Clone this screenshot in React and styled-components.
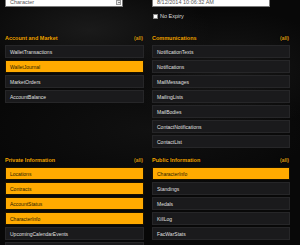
import styled, { createGlobalStyle } from "styled-components";

const Global = createGlobalStyle`
  html, body {
    margin: 0;
    padding: 0;
    background: #080808;
  }
  body {
    font-family: "Liberation Sans", Arial, sans-serif;
    overflow: hidden;
  }
`;

const Page = styled.div`
  width: 300px;
  height: 245px;
  overflow: hidden;
  padding: 0 10px 0 5px;
  box-sizing: border-box;
  background:
    radial-gradient(ellipse 120px 50px at 90px 30px, rgba(60, 60, 60, 0.35), transparent),
    radial-gradient(ellipse 110px 60px at 230px 70px, rgba(55, 55, 55, 0.3), transparent),
    radial-gradient(ellipse 160px 60px at 150px 130px, rgba(30, 30, 30, 0.4), transparent),
    #080808;
`;

const Grid = styled.div`
  display: grid;
  grid-template-columns: 139px 138px;
  column-gap: 8px;
  align-items: start;
  margin-top: ${(p) => p.$mt || 0}px;
`;

const Top = styled.div`
  height: 33px;
  display: flex;
  flex-direction: column;
`;

const Field = styled.div`
  width: ${(p) => p.$w}px;
  height: 14px;
  margin-top: -7px;
  box-sizing: border-box;
  background: #fff;
  border: 1px solid #7a7a7a;
  display: flex;
  align-items: flex-end;
  padding: 0 4px 1px;
  font-size: 5.5px;
  color: #555;
  position: relative;
`;

const Arrow = styled.div`
  position: absolute;
  right: 1px;
  bottom: 1px;
  width: 5px;
  height: 5px;
  background: #e8e8e8;
  border: 1px solid #999;
  box-sizing: border-box;
  &::after {
    content: "";
    position: absolute;
    left: 1px;
    top: 1px;
    border-left: 1px solid transparent;
    border-right: 1px solid transparent;
    border-top: 1px solid #222;
  }
`;

const Check = styled.label`
  display: flex;
  align-items: center;
  gap: 2px;
  margin-top: 6px;
  margin-left: 1px;
  font-size: 5.5px;
  color: #ddd;
`;

const Box = styled.span`
  width: 5px;
  height: 5px;
  background: #fff;
  border: 1px solid #888;
  box-sizing: border-box;
`;

const Section = styled.div`
  display: flex;
  flex-direction: column;
`;

const Header = styled.div`
  height: 10px;
  margin-bottom: 2px;
  display: flex;
  justify-content: space-between;
  align-items: center;
  color: #f0a400;
  font-size: 5.5px;
  font-weight: bold;
  text-shadow: 0 0 1px #000;
`;

const All = styled.span`
  font-size: 5px;
  font-weight: bold;
  color: #d99a10;
  margin-right: 1px;
`;

const Row = styled.div`
  height: 13px;
  margin-bottom: 2px;
  box-sizing: border-box;
  display: flex;
  align-items: center;
  padding-left: 4px;
  font-size: 5px;
  border: 1px solid ${(p) => (p.$on ? "#1a1200" : "#262628")};
  background: ${(p) => (p.$on ? "#ffaa00" : "#1a1a1c")};
  color: ${(p) => (p.$on ? "#2a1c00" : "#e6e6e6")};
  text-shadow: ${(p) => (p.$on ? "none" : "0 0 1px #000")};
`;

const topSections = [
  {
    title: "Account and Market",
    rows: [
      ["WalletTransactions", false],
      ["WalletJournal", true],
      ["MarketOrders", false],
      ["AccountBalance", false],
    ],
  },
  {
    title: "Communications",
    rows: [
      ["NotificationTexts", false],
      ["Notifications", false],
      ["MailMessages", false],
      ["MailingLists", false],
      ["MailBodies", false],
      ["ContactNotifications", false],
      ["ContactList", false],
    ],
  },
];

const bottomSections = [
  {
    title: "Private Information",
    rows: [
      ["Locations", true],
      ["Contracts", true],
      ["AccountStatus", true],
      ["CharacterInfo", true],
      ["UpcomingCalendarEvents", false],
      ["AssetList", false],
    ],
  },
  {
    title: "Public Information",
    rows: [
      ["CharacterInfo", true],
      ["Standings", false],
      ["Medals", false],
      ["KillLog", false],
      ["FacWarStats", false],
    ],
  },
];

const Group = ({ title, rows }) => (
  <Section>
    <Header>
      <span>{title}</span>
      <All>(all)</All>
    </Header>
    {rows.map(([name, on]) => (
      <Row key={name} $on={on}>
        {name}
      </Row>
    ))}
  </Section>
);

export default function App() {
  return (
    <Page>
      <Global />
      <Grid>
        <Top>
          <Field $w={118}>
            Character
            <Arrow />
          </Field>
        </Top>
        <Top>
          <Field $w={118}>8/12/2014 10:06:32 AM</Field>
          <Check>
            <Box />
            No Expiry
          </Check>
        </Top>
        {topSections.map((s) => (
          <Group key={s.title} title={s.title} rows={s.rows} />
        ))}
      </Grid>
      <Grid $mt={5}>
        {bottomSections.map((s) => (
          <Group key={s.title} title={s.title} rows={s.rows} />
        ))}
      </Grid>
    </Page>
  );
}
